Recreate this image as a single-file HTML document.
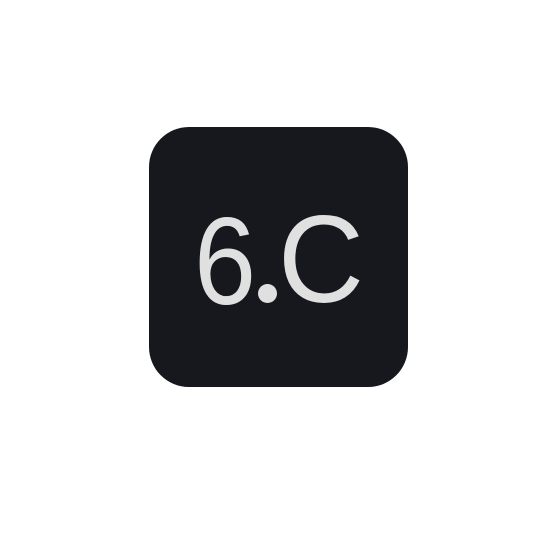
<!DOCTYPE html>
<html><head><style>
html,body{margin:0;padding:0;background:#fff;width:558px;height:558px;overflow:hidden}
.box{position:absolute;left:149px;top:127px;width:259px;height:260px;background:#17181d;border-radius:40px}
.c{position:absolute;font-family:"Liberation Sans",sans-serif;color:#e0e0e0;font-size:124px;line-height:1;top:0}
</style></head><body>
<div class="box"></div>
<div class="c" style="left:194px;top:200px;transform:scaleX(0.9);transform-origin:left">6</div>
<div style="position:absolute;left:258px;top:284px;width:19px;height:19px;border-radius:50%;background:#e0e0e0"></div>
<div class="c" style="left:278px;top:198px;transform:scaleX(0.96);transform-origin:left">C</div>
</body></html>
